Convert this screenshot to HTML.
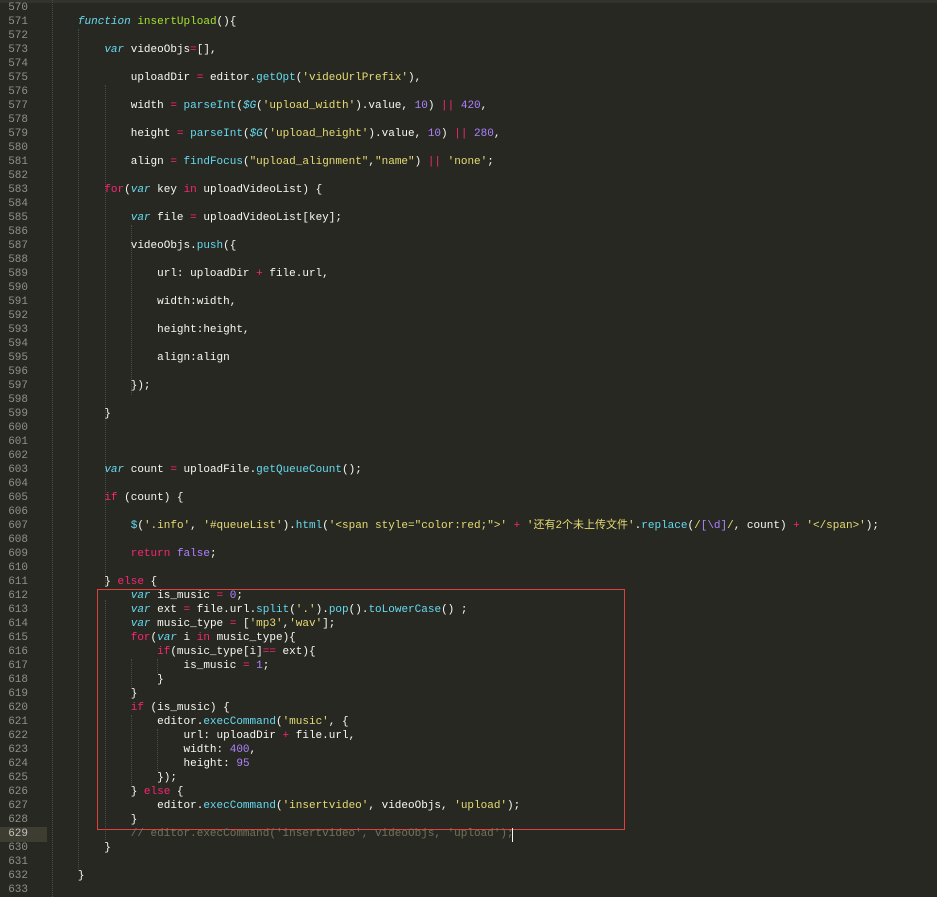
<!DOCTYPE html>
<html><head><meta charset="utf-8"><style>
html,body{margin:0;padding:0;}
body{width:937px;height:897px;background:#272822;position:relative;overflow:hidden;font-family:"Liberation Mono","Noto Sans CJK SC",monospace;font-size:11px;color:#f8f8f2;}
.ln{position:absolute;left:0;width:28px;text-align:right;color:#8f908a;height:14px;line-height:14px;}
.cd{position:absolute;left:51.5px;white-space:pre;height:14px;line-height:14px;}
.k{color:#66d9ef;font-style:italic}.f{color:#a6e22e}.o{color:#f92672}.s{color:#e6db74}.n{color:#ae81ff}.m{color:#66d9ef}.c{color:#75715e}
.g{position:absolute;width:0;border-left:1px dotted #4a4b44;}
</style></head><body>
<div style="position:absolute;left:0;top:0;width:937px;height:3px;background:#32332c"></div>
<div style="position:absolute;left:0;top:827px;width:47px;height:15px;background:#3e3d32"></div>
<div class="g" style="left:52px;top:0;height:897px"></div>
<div class="g" style="left:78px;top:29px;height:840px"></div>
<div class="g" style="left:105px;top:85px;height:500px"></div>
<div class="g" style="left:105px;top:600px;height:240px"></div>
<div class="g" style="left:131px;top:225px;height:170px"></div>
<div class="g" style="left:131px;top:659px;height:28px"></div>
<div class="g" style="left:131px;top:715px;height:70px"></div>
<div class="g" style="left:157px;top:659px;height:14px"></div>
<div class="g" style="left:157px;top:729px;height:42px"></div>
<div style="position:absolute;left:97px;top:589px;width:526px;height:239px;border:1px solid #e0403c"></div>
<div style="position:absolute;left:512px;top:828px;width:1px;height:14px;background:#f8f8f0"></div>
<div id="c"></div>
<script>
var L={
571:'    <span class="k">function</span> <span class="f">insertUpload</span>(){',
573:'        <span class="k">var</span> videoObjs<span class="o">=</span>[],',
575:'            uploadDir <span class="o">=</span> editor.<span class="m">getOpt</span>(<span class="s">\'videoUrlPrefix\'</span>),',
577:'            width <span class="o">=</span> <span class="m">parseInt</span>(<span class="k">$G</span>(<span class="s">\'upload_width\'</span>).value, <span class="n">10</span>) <span class="o">||</span> <span class="n">420</span>,',
579:'            height <span class="o">=</span> <span class="m">parseInt</span>(<span class="k">$G</span>(<span class="s">\'upload_height\'</span>).value, <span class="n">10</span>) <span class="o">||</span> <span class="n">280</span>,',
581:'            align <span class="o">=</span> <span class="m">findFocus</span>(<span class="s">"upload_alignment"</span>,<span class="s">"name"</span>) <span class="o">||</span> <span class="s">\'none\'</span>;',
583:'        <span class="o">for</span>(<span class="k">var</span> key <span class="o">in</span> uploadVideoList) {',
585:'            <span class="k">var</span> file <span class="o">=</span> uploadVideoList[key];',
587:'            videoObjs.<span class="m">push</span>({',
589:'                url: uploadDir <span class="o">+</span> file.url,',
591:'                width:width,',
593:'                height:height,',
595:'                align:align',
597:'            });',
599:'        }',
603:'        <span class="k">var</span> count <span class="o">=</span> uploadFile.<span class="m">getQueueCount</span>();',
605:'        <span class="o">if</span> (count) {',
607:'            <span class="m">$</span>(<span class="s">\'.info\'</span>, <span class="s">\'#queueList\'</span>).<span class="m">html</span>(<span class="s">\'&lt;span style="color:red;"&gt;\'</span> <span class="o">+</span> <span class="s">\'还有2个未上传文件\'</span>.<span class="m">replace</span>(<span class="s">/</span><span class="n">[\\d]</span><span class="s">/</span>, count) <span class="o">+</span> <span class="s">\'&lt;/span&gt;\'</span>);',
609:'            <span class="o">return</span> <span class="n">false</span>;',
611:'        } <span class="o">else</span> {',
612:'            <span class="k">var</span> is_music <span class="o">=</span> <span class="n">0</span>;',
613:'            <span class="k">var</span> ext <span class="o">=</span> file.url.<span class="m">split</span>(<span class="s">\'.\'</span>).<span class="m">pop</span>().<span class="m">toLowerCase</span>() ;',
614:'            <span class="k">var</span> music_type <span class="o">=</span> [<span class="s">\'mp3\'</span>,<span class="s">\'wav\'</span>];',
615:'            <span class="o">for</span>(<span class="k">var</span> i <span class="o">in</span> music_type){',
616:'                <span class="o">if</span>(music_type[i]<span class="o">==</span> ext){',
617:'                    is_music <span class="o">=</span> <span class="n">1</span>;',
618:'                }',
619:'            }',
620:'            <span class="o">if</span> (is_music) {',
621:'                editor.<span class="m">execCommand</span>(<span class="s">\'music\'</span>, {',
622:'                    url: uploadDir <span class="o">+</span> file.url,',
623:'                    width: <span class="n">400</span>,',
624:'                    height: <span class="n">95</span>',
625:'                });',
626:'            } <span class="o">else</span> {',
627:'                editor.<span class="m">execCommand</span>(<span class="s">\'insertvideo\'</span>, videoObjs, <span class="s">\'upload\'</span>);',
628:'            }',
629:'            <span class="c">// editor.execCommand(\'insertvideo\', videoObjs, \'upload\');</span>',
630:'        }',
632:'    }'
};
var h='';
for(var i=570;i<=633;i++){var t=1+(i-570)*14;
h+='<div class="ln" style="top:'+t+'px;'+(i==629?'color:#c2c2bf':'')+'">'+i+'</div>';
if(L[i])h+='<div class="cd" style="top:'+t+'px">'+L[i]+'</div>';}
document.getElementById('c').innerHTML=h;
</script>
</body></html>
